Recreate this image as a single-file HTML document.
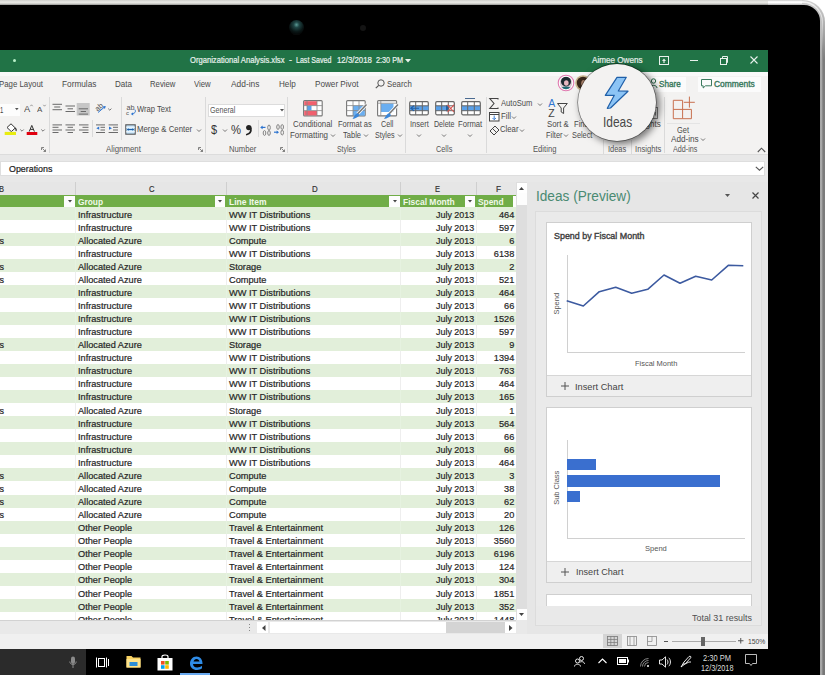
<!DOCTYPE html>
<html><head><meta charset="utf-8"><style>
html,body{margin:0;padding:0;width:825px;height:675px;overflow:hidden;background:#fff;}
body{position:relative;font-family:"Liberation Sans",sans-serif;}
.b{position:absolute;}
.s{position:absolute;overflow:visible;}
.t{position:absolute;white-space:nowrap;line-height:1;transform-origin:0 50%;}
.k{-webkit-text-stroke:0.2px currentColor;}
.k1{-webkit-text-stroke:0.1px currentColor;}
.k4{-webkit-text-stroke:0.4px currentColor;}
</style></head><body>
<div class="b" style="left:0px;top:0px;width:825px;height:675px;background:#fff;"></div>
<div class="b" style="left:-40px;top:0px;width:865px;height:700px;background:linear-gradient(180deg,#d0d0d0 0px,#b0b0b0 25px,#7c7c7c 60px,#777 100%);border-top-right-radius:22px;"></div>
<div class="b" style="left:-40px;top:1px;width:863px;height:700px;background:linear-gradient(180deg,#f4f4f4 0px,#e0e0e0 18px,#8c8c8c 50px,#888 100%);border-top-right-radius:21px;"></div>
<div class="b" style="left:-40px;top:2.5px;width:862px;height:700px;background:linear-gradient(180deg,#c8c8c8 0px,#bdbdbd 25px,#a8a8a8 60px,#a6a6a6 100%);border-top-right-radius:19px;"></div>
<div class="b" style="left:0px;top:0px;width:770px;height:5px;background:linear-gradient(180deg,#cfcfcb 0%,#ecece8 45%,#c8c8c4 80%,#8a8a8a 100%);"></div>
<div class="b" style="left:768px;top:0px;width:34px;height:5px;background:linear-gradient(180deg,#c8c8c8 0%,#f6f6f6 30%,#ffffff 55%,#b0b0b0 100%);"></div>
<div class="b" style="left:-40px;top:5px;width:860px;height:700px;background:#000;border-top-right-radius:16px;"></div>
<div class="b" style="left:288.5px;top:20px;width:15px;height:15px;border-radius:50%;background:radial-gradient(circle at 50% 32%,#5a9a95 0%,#1f4444 22%,#0a1616 55%,#050808 75%,#2a2a2a 92%,#111 100%);"></div>
<div class="b" style="left:360px;top:24.5px;width:6px;height:6px;border-radius:50%;background:#141414;"></div>
<div class="b" style="left:0px;top:50px;width:768px;height:22px;background:#217346;"></div>
<div class="t k" style="left:190.10px;top:57.00px;font-size:8.2px;color:#e8f1ec;transform:scaleX(0.9308);">Organizational Analysis.xlsx</div>
<div class="t k" style="left:289.00px;top:57.00px;font-size:8.2px;color:#e8f1ec;transform:scaleX(1.0985);">-</div>
<div class="t k" style="left:295.50px;top:57.00px;font-size:8.2px;color:#e8f1ec;transform:scaleX(0.8628);">Last Saved</div>
<div class="t k" style="left:336.60px;top:57.00px;font-size:8.2px;color:#e8f1ec;transform:scaleX(0.9594);">12/3/2018</div>
<div class="t k" style="left:375.90px;top:57.00px;font-size:8.2px;color:#e8f1ec;transform:scaleX(0.8874);">2:30 PM</div>
<svg class="s" style="left:405px;top:59px;" width="6" height="4" viewBox="0 0 6 4"><path d="M0 0L6 0L3 3.5Z" fill="#e8f1ec"/></svg>
<div class="t k" style="left:592.00px;top:57.00px;font-size:8.2px;color:#e8f1ec;transform:scaleX(0.9913);">Aimee Owens</div>
<svg class="s" style="left:659px;top:56px;" width="10" height="9" viewBox="0 0 10 9"><rect x="0.5" y="0.5" width="9" height="8" fill="none" stroke="#e8f1ec" stroke-width="1"/><path d="M5 2.5L7 5H3Z M4.4 4.5h1.2v2.5h-1.2z" fill="#e8f1ec"/></svg>
<div class="b" style="left:690px;top:60px;width:8px;height:1px;background:#e8f1ec;"></div>
<svg class="s" style="left:720px;top:56px;" width="8" height="9" viewBox="0 0 8 9"><rect x="0.5" y="2.5" width="6" height="6" fill="none" stroke="#e8f1ec"/><path d="M2.5 2.5V0.5H7.5V6.5H6.5" fill="none" stroke="#e8f1ec"/></svg>
<svg class="s" style="left:750px;top:56px;" width="8" height="8" viewBox="0 0 8 8"><path d="M0.5 0.5L7.5 7.5M7.5 0.5L0.5 7.5" stroke="#e8f1ec" stroke-width="1.1"/></svg>
<div class="b" style="left:0px;top:72px;width:768px;height:23px;background:#f3f2f1;"></div>
<div class="b" style="left:0px;top:72px;width:768px;height:4px;background:#f9f9f9;"></div>
<div class="t" style="left:-1.00px;top:80.00px;font-size:8.8px;color:#4a4a4a;transform:scaleX(0.8903);">Page Layout</div>
<div class="t" style="left:62.30px;top:80.00px;font-size:8.8px;color:#4a4a4a;transform:scaleX(0.9380);">Formulas</div>
<div class="t" style="left:114.50px;top:80.00px;font-size:8.8px;color:#4a4a4a;transform:scaleX(0.9145);">Data</div>
<div class="t" style="left:149.60px;top:80.00px;font-size:8.8px;color:#4a4a4a;transform:scaleX(0.8803);">Review</div>
<div class="t" style="left:194.20px;top:80.00px;font-size:8.8px;color:#4a4a4a;transform:scaleX(0.8829);">View</div>
<div class="t" style="left:231.30px;top:80.00px;font-size:8.8px;color:#4a4a4a;transform:scaleX(0.9518);">Add-ins</div>
<div class="t" style="left:278.70px;top:80.00px;font-size:8.8px;color:#4a4a4a;transform:scaleX(0.9227);">Help</div>
<div class="t" style="left:314.60px;top:80.00px;font-size:8.8px;color:#4a4a4a;transform:scaleX(0.9264);">Power Pivot</div>
<div class="t" style="left:387.40px;top:80.00px;font-size:8.8px;color:#4a4a4a;transform:scaleX(0.8894);">Search</div>
<svg class="s" style="left:375px;top:79px;" width="10" height="10" viewBox="0 0 10 10"><circle cx="6" cy="4" r="3.2" fill="none" stroke="#555" stroke-width="1"/><path d="M3.7 6.3L0.8 9.2" stroke="#555" stroke-width="1.2"/></svg>
<div class="b" style="left:651px;top:76.5px;width:35px;height:15px;background:#fbfbfb;"></div>
<div class="b" style="left:697.5px;top:76.5px;width:63px;height:15px;background:#fbfbfb;"></div>
<div class="t k4" style="left:659.00px;top:80.00px;font-size:8.8px;color:#3b7a5e;transform:scaleX(0.9240);">Share</div>
<div class="t k4" style="left:714.00px;top:80.00px;font-size:8.8px;color:#3b7a5e;transform:scaleX(0.9590);">Comments</div>
<svg class="s" style="left:649px;top:78px;" width="9" height="11" viewBox="0 0 9 11"><circle cx="4.5" cy="3" r="2.2" fill="none" stroke="#2b6e4c" stroke-width="1"/><path d="M1 10C1 6.5 8 6.5 8 10" fill="none" stroke="#2b6e4c" stroke-width="1"/></svg>
<svg class="s" style="left:701px;top:78.5px;" width="11.5" height="10" viewBox="0 0 11.5 10"><path d="M0.5 0.5H10.5V6.8H4.5L2.2 9V6.8H0.5Z" fill="none" stroke="#3b7a5e" stroke-width="1"/></svg>
<svg class="s" style="left:557px;top:74px;" width="18" height="18" viewBox="0 0 18 18"><defs><clipPath id="av1"><circle cx="9" cy="9" r="6.2"/></clipPath></defs><circle cx="9" cy="9" r="7.8" fill="#fff" stroke="#e07ab0" stroke-width="1.1"/><g clip-path="url(#av1)"><rect x="0" y="0" width="18" height="18" fill="#d9c8d0"/><circle cx="9" cy="7.5" r="5" fill="#1c2a30"/><ellipse cx="9.3" cy="9" rx="2.3" ry="2.8" fill="#e8b8c0"/><ellipse cx="9" cy="17" rx="6.5" ry="4.5" fill="#1e6a74"/></g></svg>
<svg class="s" style="left:574px;top:74px;" width="18" height="18" viewBox="0 0 18 18"><circle cx="9" cy="9" r="7.8" fill="#c8b48e"/><circle cx="9" cy="9" r="6.2" fill="#3a281c"/><ellipse cx="10" cy="9.5" rx="2.8" ry="3.4" fill="#b08870"/></svg>
<div class="b" style="left:12.5px;top:58.5px;width:3px;height:3px;background:#b8f0c8;border-radius:50%;"></div>
<div class="b" style="left:0px;top:95px;width:768px;height:59px;background:#f3f2f1;"></div>
<div class="b" style="left:0px;top:154px;width:768px;height:1px;background:#dcdcdc;"></div>
<div class="b" style="left:49px;top:97px;width:1px;height:56px;background:#dadada;"></div>
<div class="b" style="left:121px;top:97px;width:1px;height:43px;background:#dadada;"></div>
<div class="b" style="left:92px;top:120px;width:1px;height:17px;background:#dadada;"></div>
<div class="b" style="left:205px;top:97px;width:1px;height:56px;background:#dadada;"></div>
<div class="b" style="left:258px;top:120px;width:1px;height:17px;background:#dadada;"></div>
<div class="b" style="left:287px;top:97px;width:1px;height:56px;background:#dadada;"></div>
<div class="b" style="left:405px;top:97px;width:1px;height:56px;background:#dadada;"></div>
<div class="b" style="left:486px;top:97px;width:1px;height:56px;background:#dadada;"></div>
<div class="b" style="left:603px;top:140px;width:1px;height:14px;background:#dadada;"></div>
<div class="b" style="left:631px;top:140px;width:1px;height:14px;background:#dadada;"></div>
<div class="b" style="left:664px;top:97px;width:1px;height:56px;background:#dadada;"></div>
<div class="b" style="left:0px;top:103.9px;width:20px;height:12.1px;background:#fdfdfd;"></div>
<div class="t" style="left:-0.50px;top:106.00px;font-size:8.5px;color:#444;transform:scaleX(0.6980);">1</div>
<svg class="s" style="left:14.8px;top:108.2px;" width="4" height="3" viewBox="0 0 4 3"><path d="M0 0H3.6L1.8 2.3Z" fill="#555"/></svg>
<div class="t" style="left:24.00px;top:105.00px;font-size:9px;color:#4a4a4a;transform:scaleX(1.0328);">A</div>
<div class="t" style="left:37.00px;top:106.00px;font-size:7.8px;color:#4a4a4a;transform:scaleX(1.0187);">A</div>
<svg class="s" style="left:30px;top:104px;" width="3" height="3" viewBox="0 0 3 3"><path d="M0.3 2.2L1.5 0.8L2.7 2.2" fill="none" stroke="#777" stroke-width=".7"/></svg>
<svg class="s" style="left:43px;top:104px;" width="3" height="3" viewBox="0 0 3 3"><path d="M0.3 0.8L1.5 2.2L2.7 0.8" fill="none" stroke="#777" stroke-width=".7"/></svg>
<svg class="s" style="left:4px;top:122px;" width="14" height="14" viewBox="0 0 14 14"><path d="M3 5.5L7 1.8L11.3 6L7.3 9.6Z" fill="#fff" stroke="#333" stroke-width="1"/><path d="M11.3 6C12.2 7 12.4 8.2 12 9" fill="none" stroke="#333" stroke-width="1.3"/><rect x="0.7" y="9.9" width="11.3" height="3.1" fill="#e8ec10"/></svg>
<svg class="s" style="left:20px;top:129px;" width="4" height="3" viewBox="0 0 4 3"><path d="M0.3 0.5L2 2.2L3.7 0.5" fill="none" stroke="#555" stroke-width=".8"/></svg>
<svg class="s" style="left:26px;top:122px;" width="12" height="14" viewBox="0 0 12 14"><path d="M3.2 9.6L5.8 3.4L8.4 9.6M4.2 7.4H7.4" fill="none" stroke="#333" stroke-width="1"/><rect x="0.7" y="10" width="10.6" height="3" fill="#e00010"/></svg>
<svg class="s" style="left:41px;top:129px;" width="4" height="3" viewBox="0 0 4 3"><path d="M0.3 0.5L2 2.2L3.7 0.5" fill="none" stroke="#555" stroke-width=".8"/></svg>
<svg class="s" style="left:0;top:0" width="825" height="200" viewBox="0 0 825 200"><rect x="52.50" y="103.80" width="9.50" height="1.0" fill="#6a6a6a"/><rect x="54.20" y="106.50" width="6.10" height="1.0" fill="#6a6a6a"/><rect x="52.50" y="109.20" width="9.50" height="1.0" fill="#6a6a6a"/><rect x="65.50" y="105.50" width="9.50" height="1.0" fill="#6a6a6a"/><rect x="67.50" y="108.30" width="5.50" height="1.0" fill="#6a6a6a"/><rect x="65.50" y="111.00" width="9.50" height="1.0" fill="#6a6a6a"/><rect x="76.7" y="103" width="13" height="12.5" fill="#c6c6c6"/><rect x="78.70" y="108.30" width="9.30" height="1.0" fill="#6a6a6a"/><rect x="80.70" y="111.00" width="5.30" height="1.0" fill="#6a6a6a"/><rect x="78.70" y="113.60" width="9.30" height="1.0" fill="#6a6a6a"/><rect x="52.50" y="124.40" width="9.50" height="1.0" fill="#6a6a6a"/><rect x="65.50" y="124.40" width="9.50" height="1.0" fill="#6a6a6a"/><rect x="79.00" y="124.40" width="9.50" height="1.0" fill="#6a6a6a"/><rect x="52.50" y="126.80" width="6.00" height="1.0" fill="#6a6a6a"/><rect x="67.50" y="126.80" width="5.50" height="1.0" fill="#6a6a6a"/><rect x="82.50" y="126.80" width="6.00" height="1.0" fill="#6a6a6a"/><rect x="52.50" y="129.50" width="9.50" height="1.0" fill="#6a6a6a"/><rect x="65.50" y="129.50" width="9.50" height="1.0" fill="#6a6a6a"/><rect x="79.00" y="129.50" width="9.50" height="1.0" fill="#6a6a6a"/><rect x="52.50" y="132.00" width="6.00" height="1.0" fill="#6a6a6a"/><rect x="67.50" y="132.00" width="5.50" height="1.0" fill="#6a6a6a"/><rect x="82.50" y="132.00" width="6.00" height="1.0" fill="#6a6a6a"/><rect x="96.00" y="124.40" width="9.00" height="1.0" fill="#6a6a6a"/><rect x="100.50" y="126.80" width="4.50" height="1.0" fill="#6a6a6a"/><rect x="100.50" y="129.50" width="4.50" height="1.0" fill="#6a6a6a"/><rect x="96.00" y="132.00" width="9.00" height="1.0" fill="#6a6a6a"/><path d="M96.3 128.2L99.2 126.6V129.8Z" fill="#2e75d0"/><rect x="108.60" y="124.40" width="9.40" height="1.0" fill="#6a6a6a"/><rect x="113.00" y="126.80" width="5.00" height="1.0" fill="#6a6a6a"/><rect x="113.00" y="129.50" width="5.00" height="1.0" fill="#6a6a6a"/><rect x="108.60" y="132.00" width="9.40" height="1.0" fill="#6a6a6a"/><path d="M112 128.2L109 126.6V129.8Z" fill="#2e75d0"/><text x="95" y="110" font-size="7.5" font-family="Liberation Sans" fill="#555" transform="rotate(-40 98.5 107.5)">ab</text><path d="M98 112.5L104.8 106.8" stroke="#2e75d0" stroke-width="1"/><path d="M105.8 106L102.6 106.6L104.9 109Z" fill="#2e75d0"/><path d="M108.2 108.6L109.8 110.2L111.4 108.6" fill="none" stroke="#555" stroke-width=".8"/></svg>
<svg class="s" style="left:125px;top:102px;" width="12" height="14" viewBox="0 0 12 14"><text x="1.5" y="7.8" font-size="7.2" font-family="Liberation Sans" fill="#555">ab</text><text x="1" y="13" font-size="6" font-family="Liberation Sans" fill="#555">c</text><path d="M9.8 7.5C11 9 10.5 11.2 7.5 11.8" fill="none" stroke="#2e75d0" stroke-width="1"/><path d="M5.8 11.9L8.2 10.3V13.5Z" fill="#2e75d0"/></svg>
<div class="t" style="left:136.80px;top:105.00px;font-size:8.8px;color:#4a4a4a;transform:scaleX(0.8653);">Wrap Text</div>
<svg class="s" style="left:124.5px;top:123.5px;" width="11" height="11" viewBox="0 0 11 11"><rect x="0.8" y="0.8" width="9.4" height="9.4" fill="#bfe0f8" stroke="#555" stroke-width="1.1"/><path d="M1 3.2H10M1 7.8H10" stroke="#fff" stroke-width=".9"/><path d="M2.3 5.5H8.7" stroke="#1f5fa8" stroke-width="1"/><path d="M2 5.5L3.8 4.2V6.8Z M9 5.5L7.2 4.2V6.8Z" fill="#1f5fa8"/></svg>
<div class="t" style="left:136.80px;top:125.00px;font-size:8.8px;color:#4a4a4a;transform:scaleX(0.8886);">Merge &amp; Center</div>
<svg class="s" style="left:196.5px;top:128.5px;" width="4" height="3" viewBox="0 0 4 3"><path d="M0 0.5L2 2.5L4 0.5" fill="none" stroke="#555" stroke-width=".8"/></svg>
<div class="t" style="left:105.60px;top:145.00px;font-size:8.8px;color:#555;transform:scaleX(0.8918);">Alignment</div>
<svg class="s" style="left:40.5px;top:147px;" width="5" height="5" viewBox="0 0 5 5"><path d="M0.5 0.5H3M0.5 0.5V3M1.5 1.5L4.5 4.5M4.5 2.5V4.5H2.5" fill="none" stroke="#666" stroke-width=".8"/></svg>
<svg class="s" style="left:198px;top:147px;" width="5" height="5" viewBox="0 0 5 5"><path d="M0.5 0.5H3M0.5 0.5V3M1.5 1.5L4.5 4.5M4.5 2.5V4.5H2.5" fill="none" stroke="#666" stroke-width=".8"/></svg>
<div class="b" style="left:208px;top:103.5px;width:76.5px;height:13px;background:#fff;border:1px solid #dcdcdc;box-sizing:border-box;"></div>
<div class="t" style="left:210.00px;top:106.00px;font-size:8.8px;color:#555;transform:scaleX(0.8113);">General</div>
<svg class="s" style="left:279.5px;top:109px;" width="4" height="3" viewBox="0 0 4 3"><path d="M0 0H4L2 2.5Z" fill="#555"/></svg>
<div class="t" style="left:210.50px;top:123.00px;font-size:13px;color:#333;transform:scaleX(0.8437);">$</div>
<svg class="s" style="left:222.5px;top:129px;" width="4" height="3" viewBox="0 0 4 3"><path d="M0 0.5L2 2.5L4 0.5" fill="none" stroke="#555" stroke-width=".8"/></svg>
<div class="t" style="left:230.50px;top:123.00px;font-size:13px;color:#333;transform:scaleX(0.8651);">%</div>
<svg class="s" style="left:245px;top:124px;" width="8" height="11" viewBox="0 0 8 11"><circle cx="3.8" cy="3.6" r="2.7" fill="#222"/><path d="M5.8 4.5C6.3 7.5 4.5 9.8 1.8 10.5" fill="none" stroke="#222" stroke-width="1.8" stroke-linecap="round"/></svg>
<svg class="s" style="left:259px;top:123px;" width="13" height="13" viewBox="0 0 13 13"><path d="M6.5 4.4H2.2" stroke="#2e75d0" stroke-width="1.2"/><path d="M1.2 4.4L3.6 2.6V6.2Z" fill="#2e75d0"/><ellipse cx="10" cy="4.6" rx="1.3" ry="2.6" fill="none" stroke="#777" stroke-width=".9"/><ellipse cx="5.5" cy="10" rx="1.3" ry="2.4" fill="none" stroke="#777" stroke-width=".9"/><ellipse cx="10" cy="10" rx="1.3" ry="2.4" fill="none" stroke="#777" stroke-width=".9"/></svg>
<svg class="s" style="left:273px;top:123px;" width="12" height="13" viewBox="0 0 12 13"><ellipse cx="5" cy="4" rx="1.3" ry="2.4" fill="none" stroke="#777" stroke-width=".9"/><ellipse cx="9.2" cy="4" rx="1.3" ry="2.4" fill="none" stroke="#777" stroke-width=".9"/><path d="M1 9.2H5" stroke="#2e75d0" stroke-width="1.2"/><path d="M6 9.2L3.6 7.4V11Z" fill="#2e75d0"/><ellipse cx="9.2" cy="9.6" rx="1.3" ry="2.4" fill="none" stroke="#777" stroke-width=".9"/></svg>
<div class="t" style="left:228.50px;top:145.00px;font-size:8.8px;color:#555;transform:scaleX(0.8722);">Number</div>
<svg class="s" style="left:280px;top:147px;" width="5" height="5" viewBox="0 0 5 5"><path d="M0.5 0.5H3M0.5 0.5V3M1.5 1.5L4.5 4.5M4.5 2.5V4.5H2.5" fill="none" stroke="#666" stroke-width=".8"/></svg>
<svg class="s" style="left:303px;top:99.5px;" width="20" height="17" viewBox="0 0 20 17"><rect x="0.6" y="0.6" width="18.6" height="15.3" rx="1" fill="#fff" stroke="#777" stroke-width="1.1"/><rect x="1.2" y="1.2" width="12.8" height="4.3" fill="#f0606e"/><rect x="4" y="5.8" width="4.5" height="4.6" fill="#5aa0e8"/><rect x="1.2" y="10.8" width="12.8" height="4.6" fill="#f0606e"/><path d="M4 0.6V15.9M14 0.6V15.9M0.6 5.6H19.2M0.6 10.6H19.2" stroke="#888" stroke-width=".8"/></svg>
<svg class="s" style="left:345.5px;top:99.5px;" width="22" height="20" viewBox="0 0 22 20"><rect x="0.6" y="0.6" width="18.6" height="15.3" rx="1" fill="#fff" stroke="#777" stroke-width="1.1"/><rect x="7" y="5.6" width="11.8" height="10" fill="#6aaef0"/><path d="M7 0.6V15.9M13 0.6V15.9M0.6 5.6H19.2M0.6 10.6H19.2" stroke="#888" stroke-width=".8"/><path d="M20.5 4.5L11.5 14" stroke="#fff" stroke-width="3.2"/><path d="M20.5 4.5L11.5 14" stroke="#777" stroke-width="1.6"/><path d="M11.8 13.2C9.5 13.5 8.5 15.5 6.5 19C9.5 18.5 12.5 17 13.5 15Z" fill="#3a86d8"/></svg>
<svg class="s" style="left:377px;top:99.5px;" width="22" height="20" viewBox="0 0 22 20"><rect x="0.6" y="0.6" width="19" height="15.3" rx="1" fill="#fff" stroke="#777" stroke-width="1.1"/><rect x="4" y="3.5" width="12.5" height="8.5" fill="#6aaef0"/><path d="M0.6 3.2H19.6M3.8 0.6V15.9" stroke="#888" stroke-width=".8"/><path d="M21 4.5L12 14" stroke="#fff" stroke-width="3.2"/><path d="M21 4.5L12 14" stroke="#777" stroke-width="1.6"/><path d="M12.3 13.2C10 13.5 9 15.5 7 19C10 18.5 13 17 14 15Z" fill="#3a86d8"/></svg>
<div class="t" style="left:293.00px;top:120.00px;font-size:8.8px;color:#4a4a4a;transform:scaleX(0.8925);">Conditional</div>
<div class="t" style="left:290.00px;top:131.00px;font-size:8.8px;color:#4a4a4a;transform:scaleX(0.9035);">Formatting</div>
<div class="t" style="left:338.00px;top:120.00px;font-size:8.8px;color:#4a4a4a;transform:scaleX(0.8533);">Format as</div>
<div class="t" style="left:343.00px;top:131.00px;font-size:8.8px;color:#4a4a4a;transform:scaleX(0.8556);">Table</div>
<div class="t" style="left:381.00px;top:120.00px;font-size:8.8px;color:#4a4a4a;transform:scaleX(0.8179);">Cell</div>
<div class="t" style="left:374.50px;top:131.00px;font-size:8.8px;color:#4a4a4a;transform:scaleX(0.8137);">Styles</div>
<svg class="s" style="left:331px;top:134px;" width="4" height="3" viewBox="0 0 4 3"><path d="M0 0.5L2 2.5L4 0.5" fill="none" stroke="#555" stroke-width=".8"/></svg>
<svg class="s" style="left:364px;top:134px;" width="4" height="3" viewBox="0 0 4 3"><path d="M0 0.5L2 2.5L4 0.5" fill="none" stroke="#555" stroke-width=".8"/></svg>
<svg class="s" style="left:397.5px;top:134px;" width="4" height="3" viewBox="0 0 4 3"><path d="M0 0.5L2 2.5L4 0.5" fill="none" stroke="#555" stroke-width=".8"/></svg>
<div class="t" style="left:337.00px;top:145.00px;font-size:8.8px;color:#555;transform:scaleX(0.7845);">Styles</div>
<svg class="s" style="left:409.4px;top:100.5px;" width="22" height="16.5" viewBox="0 0 22 16.5"><rect x="0.7" y="0.7" width="18.6" height="13.1" rx="1.2" fill="#fff" stroke="#666" stroke-width="1.2"/><rect x="1" y="4.8" width="18.5" height="4.9" fill="#5aa0e8"/><path d="M6.7 0.7V13.8M13.3 0.7V13.8M0.7 4.8H19.3M0.7 9.7H19.3" stroke="#666" stroke-width="1"/><path d="M10 7.25H2.2M5 4.6L1.8 7.25L5 9.9" fill="none" stroke="#1f5fa8" stroke-width="1.1"/></svg>
<svg class="s" style="left:434.5px;top:100.5px;" width="22" height="16.5" viewBox="0 0 22 16.5"><rect x="0.7" y="0.7" width="18.6" height="13.1" rx="1.2" fill="#fff" stroke="#666" stroke-width="1.2"/><rect x="1" y="4.8" width="12" height="4.9" fill="#5aa0e8"/><path d="M11 3.8L14.5 7.25L11 10.7Z" fill="#1f5fa8"/><path d="M6.7 0.7V13.8M13.3 0.7V13.8M0.7 4.8H19.3M0.7 9.7H19.3" stroke="#666" stroke-width="1"/><path d="M12.5 3.8L19 11M19 3.8L12.5 11" stroke="#d9534f" stroke-width="1.1"/></svg>
<svg class="s" style="left:461px;top:100.5px;" width="22" height="16.5" viewBox="0 0 22 16.5"><rect x="0.7" y="0.7" width="18.6" height="13.1" rx="1.2" fill="#fff" stroke="#666" stroke-width="1.2"/><rect x="1" y="4.8" width="18" height="4.9" fill="#5aa0e8"/><path d="M6.7 0.7V13.8M13.3 0.7V13.8M0.7 4.8H19.3M0.7 9.7H19.3" stroke="#666" stroke-width="1"/></svg>
<div class="b" style="left:465px;top:97.5px;width:10px;height:1.2px;background:#4a6a90;"></div>
<div class="t" style="left:409.70px;top:120.00px;font-size:8.8px;color:#4a4a4a;transform:scaleX(0.8542);">Insert</div>
<div class="t" style="left:434.00px;top:120.00px;font-size:8.8px;color:#4a4a4a;transform:scaleX(0.8059);">Delete</div>
<div class="t" style="left:457.60px;top:120.00px;font-size:8.8px;color:#4a4a4a;transform:scaleX(0.8683);">Format</div>
<svg class="s" style="left:417px;top:133.5px;" width="4" height="3" viewBox="0 0 4 3"><path d="M0 0.5L2 2.5L4 0.5" fill="none" stroke="#555" stroke-width=".8"/></svg>
<svg class="s" style="left:442px;top:133.5px;" width="4" height="3" viewBox="0 0 4 3"><path d="M0 0.5L2 2.5L4 0.5" fill="none" stroke="#555" stroke-width=".8"/></svg>
<svg class="s" style="left:468px;top:133.5px;" width="4" height="3" viewBox="0 0 4 3"><path d="M0 0.5L2 2.5L4 0.5" fill="none" stroke="#555" stroke-width=".8"/></svg>
<div class="t" style="left:436.40px;top:145.00px;font-size:8.8px;color:#555;transform:scaleX(0.8333);">Cells</div>
<svg class="s" style="left:489px;top:97.5px;" width="10" height="11" viewBox="0 0 10 11"><path d="M9 1.5V0.5H0.8L5 5.5L0.8 10.5H9V9.5" fill="none" stroke="#444" stroke-width="1.1"/></svg>
<div class="t" style="left:501.00px;top:99.00px;font-size:8.8px;color:#4a4a4a;transform:scaleX(0.8674);">AutoSum</div>
<svg class="s" style="left:537.5px;top:102.5px;" width="4" height="3" viewBox="0 0 4 3"><path d="M0 0.5L2 2.5L4 0.5" fill="none" stroke="#555" stroke-width=".8"/></svg>
<svg class="s" style="left:489px;top:111.5px;" width="10.5" height="9.5" viewBox="0 0 10.5 9.5"><rect x="0.5" y="0.5" width="9.5" height="8.5" fill="#fff" stroke="#444"/><path d="M0.5 2.5H10" stroke="#444"/><path d="M5.2 3.5V7.5M3.5 6L5.2 7.7L7 6" fill="none" stroke="#2e75d0" stroke-width=".9"/></svg>
<div class="t" style="left:500.50px;top:112.00px;font-size:8.8px;color:#4a4a4a;transform:scaleX(0.8896);">Fill</div>
<svg class="s" style="left:512px;top:115.5px;" width="4" height="3" viewBox="0 0 4 3"><path d="M0 0.5L2 2.5L4 0.5" fill="none" stroke="#555" stroke-width=".8"/></svg>
<svg class="s" style="left:488.5px;top:125px;" width="11" height="10" viewBox="0 0 11 10"><path d="M1 6L6 1L10 5L5 10Z M3.5 3.5L7.5 7.5" fill="none" stroke="#444" stroke-width="1"/></svg>
<div class="t" style="left:500.00px;top:125.00px;font-size:8.8px;color:#4a4a4a;transform:scaleX(0.8797);">Clear</div>
<svg class="s" style="left:520px;top:129px;" width="4" height="3" viewBox="0 0 4 3"><path d="M0 0.5L2 2.5L4 0.5" fill="none" stroke="#555" stroke-width=".8"/></svg>
<svg class="s" style="left:547px;top:96px;" width="22" height="22" viewBox="0 0 22 22"><text x="1.2" y="10.8" font-size="10.5" font-family="Liberation Sans" fill="#2e75d0">A</text><text x="1.2" y="21" font-size="10.5" font-family="Liberation Sans" fill="#444">Z</text><path d="M10.5 7.5H20.3L16.6 12V17.5L14.2 16V12Z" fill="none" stroke="#444" stroke-width="1"/></svg>
<div class="t" style="left:547.00px;top:120.00px;font-size:8.8px;color:#4a4a4a;transform:scaleX(0.8874);">Sort &amp;</div>
<div class="t" style="left:545.50px;top:131.00px;font-size:8.8px;color:#4a4a4a;transform:scaleX(0.8437);">Filter</div>
<svg class="s" style="left:564px;top:134px;" width="4" height="3" viewBox="0 0 4 3"><path d="M0 0.5L2 2.5L4 0.5" fill="none" stroke="#555" stroke-width=".8"/></svg>
<div class="t" style="left:574.00px;top:120.00px;font-size:8.8px;color:#4a4a4a;transform:scaleX(0.8650);">Find &amp;</div>
<div class="t" style="left:571.60px;top:131.00px;font-size:8.8px;color:#4a4a4a;transform:scaleX(0.8341);">Select</div>
<div class="t" style="left:533.00px;top:145.00px;font-size:8.8px;color:#555;transform:scaleX(0.8696);">Editing</div>
<div class="t" style="left:633.00px;top:120.00px;font-size:8.8px;color:#4a4a4a;transform:scaleX(0.9134);">Insights</div>
<div class="t" style="left:607.80px;top:145.00px;font-size:8.8px;color:#555;transform:scaleX(0.8454);">Ideas</div>
<div class="t" style="left:634.60px;top:145.00px;font-size:8.8px;color:#555;transform:scaleX(0.8705);">Insights</div>
<svg class="s" style="left:670px;top:94px;" width="28" height="28" viewBox="0 0 28 28"><path d="M3.3 6.3H12.6V24.7H3.3Z M3.3 15.4H21.4V24.7H12.6 M19.4 2.6V13.6 M13.8 8.3H24.8" fill="none" stroke="#c8704f" stroke-width="1"/></svg>
<div class="b" style="left:667px;top:123px;width:33px;height:1px;background:#e4e4e4;"></div>
<div class="t" style="left:677.00px;top:126.00px;font-size:8.8px;color:#4a4a4a;transform:scaleX(0.8460);">Get</div>
<div class="t" style="left:670.80px;top:135.00px;font-size:8.8px;color:#4a4a4a;transform:scaleX(0.9283);">Add-ins</div>
<svg class="s" style="left:700.5px;top:137.5px;" width="4" height="3" viewBox="0 0 4 3"><path d="M0 0.5L2 2.5L4 0.5" fill="none" stroke="#555" stroke-width=".8"/></svg>
<div class="t" style="left:673.00px;top:145.00px;font-size:8.8px;color:#555;transform:scaleX(0.8144);">Add-ins</div>
<svg class="s" style="left:757px;top:147px;" width="9" height="6" viewBox="0 0 9 6"><path d="M0.8 5L4.5 1.2L8.2 5" fill="none" stroke="#555" stroke-width="1.1"/></svg>
<svg class="s" style="left:648px;top:107px;" width="11" height="12" viewBox="0 0 11 12"><rect x="0.5" y="0.5" width="9" height="11" fill="none" stroke="#777" stroke-width=".9"/><path d="M2.5 8.5V6M5 8.5V3.5M7.5 8.5V5" stroke="#777" stroke-width=".9"/></svg>
<div class="b" style="left:578px;top:63.5px;width:78px;height:77px;border-radius:50%;background:#f3f2f1;box-shadow:0 0 0 0.7px rgba(0,0,0,0.45), 3px 2.5px 7px 1px rgba(0,0,0,0.5);"></div>
<svg class="s" style="left:600px;top:70px;" width="32" height="42" viewBox="0 0 32 42"><path d="M17 7.3L26.3 7.3L18.3 21L28 21.2L10.5 38L7.3 38.3L14.3 25.3L5.3 25.3Z" fill="#8cc4f5" stroke="#1f5fa8" stroke-width="1.2" stroke-linejoin="round"/></svg>
<div class="t" style="left:603.00px;top:115.00px;font-size:14.2px;color:#484848;transform:scaleX(0.8406);-webkit-text-stroke:0;">Ideas</div>
<div class="b" style="left:0px;top:155px;width:768px;height:27px;background:#e8e8e8;"></div>
<div class="b" style="left:0px;top:160.5px;width:765px;height:15px;background:#fff;border:1px solid #dedede;box-sizing:border-box;"></div>
<div class="t k" style="left:8.70px;top:165.00px;font-size:9px;color:#222;transform:scaleX(0.9858);">Operations</div>
<svg class="s" style="left:755px;top:166px;" width="9" height="5" viewBox="0 0 9 5"><path d="M0.8 0.8L4.5 4.2L8.2 0.8" fill="none" stroke="#555" stroke-width="1.1"/></svg>
<div class="b" style="left:0px;top:181.6px;width:516px;height:13.4px;background:#e6e6e6;"></div>
<div class="b" style="left:75px;top:182px;width:1px;height:13px;background:#cfcfcf;"></div>
<div class="b" style="left:226px;top:182px;width:1px;height:13px;background:#cfcfcf;"></div>
<div class="b" style="left:400px;top:182px;width:1px;height:13px;background:#cfcfcf;"></div>
<div class="b" style="left:476px;top:182px;width:1px;height:13px;background:#cfcfcf;"></div>
<div class="t k" style="left:-1.00px;top:185.00px;font-size:9px;color:#333;transform:scaleX(0.8329);">B</div>
<div class="t k" style="left:148.80px;top:185.00px;font-size:9px;color:#333;transform:scaleX(0.8462);">C</div>
<div class="t k" style="left:311.60px;top:185.00px;font-size:9px;color:#333;transform:scaleX(0.8770);">D</div>
<div class="t k" style="left:434.50px;top:185.00px;font-size:9px;color:#333;transform:scaleX(0.8329);">E</div>
<div class="t k" style="left:495.50px;top:185.00px;font-size:9px;color:#333;transform:scaleX(0.9095);">F</div>
<div class="b" style="left:0px;top:195px;width:516px;height:12px;background:#70ad47;"></div>
<div class="t" style="left:78.00px;top:197.00px;font-size:9.6px;color:#f2f9ec;font-weight:bold;transform:scaleX(0.8682);">Group</div>
<div class="t" style="left:228.70px;top:197.00px;font-size:9.6px;color:#f2f9ec;font-weight:bold;transform:scaleX(0.8899);">Line Item</div>
<div class="t" style="left:402.90px;top:197.00px;font-size:9.6px;color:#f2f9ec;font-weight:bold;transform:scaleX(0.8829);">Fiscal Month</div>
<div class="t" style="left:477.60px;top:197.00px;font-size:9.6px;color:#f2f9ec;font-weight:bold;transform:scaleX(0.8727);">Spend</div>
<div class="b" style="left:64.3px;top:195.5px;width:10.5px;height:11px;background:#fdfdfd;"></div>
<svg class="s" style="left:67.5px;top:200px;" width="4" height="3" viewBox="0 0 4 3"><path d="M0 0H4L2 2.5Z" fill="#444"/></svg>
<div class="b" style="left:214.8px;top:195.5px;width:10.5px;height:11px;background:#fdfdfd;"></div>
<svg class="s" style="left:218.0px;top:200px;" width="4" height="3" viewBox="0 0 4 3"><path d="M0 0H4L2 2.5Z" fill="#444"/></svg>
<div class="b" style="left:389.3px;top:195.5px;width:10.5px;height:11px;background:#fdfdfd;"></div>
<svg class="s" style="left:392.5px;top:200px;" width="4" height="3" viewBox="0 0 4 3"><path d="M0 0H4L2 2.5Z" fill="#444"/></svg>
<div class="b" style="left:464.8px;top:195.5px;width:10.5px;height:11px;background:#fdfdfd;"></div>
<svg class="s" style="left:468.0px;top:200px;" width="4" height="3" viewBox="0 0 4 3"><path d="M0 0H4L2 2.5Z" fill="#444"/></svg>
<div class="b" style="left:512.9px;top:195.5px;width:3.1px;height:11px;background:#fdfdfd;"></div>
<div class="b" style="left:0;top:207px;width:516px;height:413px;overflow:hidden;background:#fff;">
<div class="b" style="left:75px;top:0;width:1px;height:413px;background:#eeeeee;"></div>
<div class="b" style="left:226px;top:0;width:1px;height:413px;background:#eeeeee;"></div>
<div class="b" style="left:400px;top:0;width:1px;height:413px;background:#eeeeee;"></div>
<div class="b" style="left:476px;top:0;width:1px;height:413px;background:#eeeeee;"></div>
<div class="b" style="left:0;top:0.00px;width:516px;height:13.07px;background:#e2efda;"></div>
<div class="b" style="left:75px;top:0.00px;width:1px;height:13.07px;background:#e6f2e0;"></div>
<div class="b" style="left:226px;top:0.00px;width:1px;height:13.07px;background:#e6f2e0;"></div>
<div class="b" style="left:400px;top:0.00px;width:1px;height:13.07px;background:#e6f2e0;"></div>
<div class="b" style="left:476px;top:0.00px;width:1px;height:13.07px;background:#e6f2e0;"></div>
<div class="b" style="left:0;top:26.14px;width:516px;height:13.07px;background:#e2efda;"></div>
<div class="b" style="left:75px;top:26.14px;width:1px;height:13.07px;background:#e6f2e0;"></div>
<div class="b" style="left:226px;top:26.14px;width:1px;height:13.07px;background:#e6f2e0;"></div>
<div class="b" style="left:400px;top:26.14px;width:1px;height:13.07px;background:#e6f2e0;"></div>
<div class="b" style="left:476px;top:26.14px;width:1px;height:13.07px;background:#e6f2e0;"></div>
<div class="b" style="left:0;top:52.28px;width:516px;height:13.07px;background:#e2efda;"></div>
<div class="b" style="left:75px;top:52.28px;width:1px;height:13.07px;background:#e6f2e0;"></div>
<div class="b" style="left:226px;top:52.28px;width:1px;height:13.07px;background:#e6f2e0;"></div>
<div class="b" style="left:400px;top:52.28px;width:1px;height:13.07px;background:#e6f2e0;"></div>
<div class="b" style="left:476px;top:52.28px;width:1px;height:13.07px;background:#e6f2e0;"></div>
<div class="b" style="left:0;top:78.42px;width:516px;height:13.07px;background:#e2efda;"></div>
<div class="b" style="left:75px;top:78.42px;width:1px;height:13.07px;background:#e6f2e0;"></div>
<div class="b" style="left:226px;top:78.42px;width:1px;height:13.07px;background:#e6f2e0;"></div>
<div class="b" style="left:400px;top:78.42px;width:1px;height:13.07px;background:#e6f2e0;"></div>
<div class="b" style="left:476px;top:78.42px;width:1px;height:13.07px;background:#e6f2e0;"></div>
<div class="b" style="left:0;top:104.56px;width:516px;height:13.07px;background:#e2efda;"></div>
<div class="b" style="left:75px;top:104.56px;width:1px;height:13.07px;background:#e6f2e0;"></div>
<div class="b" style="left:226px;top:104.56px;width:1px;height:13.07px;background:#e6f2e0;"></div>
<div class="b" style="left:400px;top:104.56px;width:1px;height:13.07px;background:#e6f2e0;"></div>
<div class="b" style="left:476px;top:104.56px;width:1px;height:13.07px;background:#e6f2e0;"></div>
<div class="b" style="left:0;top:130.70px;width:516px;height:13.07px;background:#e2efda;"></div>
<div class="b" style="left:75px;top:130.70px;width:1px;height:13.07px;background:#e6f2e0;"></div>
<div class="b" style="left:226px;top:130.70px;width:1px;height:13.07px;background:#e6f2e0;"></div>
<div class="b" style="left:400px;top:130.70px;width:1px;height:13.07px;background:#e6f2e0;"></div>
<div class="b" style="left:476px;top:130.70px;width:1px;height:13.07px;background:#e6f2e0;"></div>
<div class="b" style="left:0;top:156.84px;width:516px;height:13.07px;background:#e2efda;"></div>
<div class="b" style="left:75px;top:156.84px;width:1px;height:13.07px;background:#e6f2e0;"></div>
<div class="b" style="left:226px;top:156.84px;width:1px;height:13.07px;background:#e6f2e0;"></div>
<div class="b" style="left:400px;top:156.84px;width:1px;height:13.07px;background:#e6f2e0;"></div>
<div class="b" style="left:476px;top:156.84px;width:1px;height:13.07px;background:#e6f2e0;"></div>
<div class="b" style="left:0;top:182.98px;width:516px;height:13.07px;background:#e2efda;"></div>
<div class="b" style="left:75px;top:182.98px;width:1px;height:13.07px;background:#e6f2e0;"></div>
<div class="b" style="left:226px;top:182.98px;width:1px;height:13.07px;background:#e6f2e0;"></div>
<div class="b" style="left:400px;top:182.98px;width:1px;height:13.07px;background:#e6f2e0;"></div>
<div class="b" style="left:476px;top:182.98px;width:1px;height:13.07px;background:#e6f2e0;"></div>
<div class="b" style="left:0;top:209.12px;width:516px;height:13.07px;background:#e2efda;"></div>
<div class="b" style="left:75px;top:209.12px;width:1px;height:13.07px;background:#e6f2e0;"></div>
<div class="b" style="left:226px;top:209.12px;width:1px;height:13.07px;background:#e6f2e0;"></div>
<div class="b" style="left:400px;top:209.12px;width:1px;height:13.07px;background:#e6f2e0;"></div>
<div class="b" style="left:476px;top:209.12px;width:1px;height:13.07px;background:#e6f2e0;"></div>
<div class="b" style="left:0;top:235.26px;width:516px;height:13.07px;background:#e2efda;"></div>
<div class="b" style="left:75px;top:235.26px;width:1px;height:13.07px;background:#e6f2e0;"></div>
<div class="b" style="left:226px;top:235.26px;width:1px;height:13.07px;background:#e6f2e0;"></div>
<div class="b" style="left:400px;top:235.26px;width:1px;height:13.07px;background:#e6f2e0;"></div>
<div class="b" style="left:476px;top:235.26px;width:1px;height:13.07px;background:#e6f2e0;"></div>
<div class="b" style="left:0;top:261.40px;width:516px;height:13.07px;background:#e2efda;"></div>
<div class="b" style="left:75px;top:261.40px;width:1px;height:13.07px;background:#e6f2e0;"></div>
<div class="b" style="left:226px;top:261.40px;width:1px;height:13.07px;background:#e6f2e0;"></div>
<div class="b" style="left:400px;top:261.40px;width:1px;height:13.07px;background:#e6f2e0;"></div>
<div class="b" style="left:476px;top:261.40px;width:1px;height:13.07px;background:#e6f2e0;"></div>
<div class="b" style="left:0;top:287.54px;width:516px;height:13.07px;background:#e2efda;"></div>
<div class="b" style="left:75px;top:287.54px;width:1px;height:13.07px;background:#e6f2e0;"></div>
<div class="b" style="left:226px;top:287.54px;width:1px;height:13.07px;background:#e6f2e0;"></div>
<div class="b" style="left:400px;top:287.54px;width:1px;height:13.07px;background:#e6f2e0;"></div>
<div class="b" style="left:476px;top:287.54px;width:1px;height:13.07px;background:#e6f2e0;"></div>
<div class="b" style="left:0;top:313.68px;width:516px;height:13.07px;background:#e2efda;"></div>
<div class="b" style="left:75px;top:313.68px;width:1px;height:13.07px;background:#e6f2e0;"></div>
<div class="b" style="left:226px;top:313.68px;width:1px;height:13.07px;background:#e6f2e0;"></div>
<div class="b" style="left:400px;top:313.68px;width:1px;height:13.07px;background:#e6f2e0;"></div>
<div class="b" style="left:476px;top:313.68px;width:1px;height:13.07px;background:#e6f2e0;"></div>
<div class="b" style="left:0;top:339.82px;width:516px;height:13.07px;background:#e2efda;"></div>
<div class="b" style="left:75px;top:339.82px;width:1px;height:13.07px;background:#e6f2e0;"></div>
<div class="b" style="left:226px;top:339.82px;width:1px;height:13.07px;background:#e6f2e0;"></div>
<div class="b" style="left:400px;top:339.82px;width:1px;height:13.07px;background:#e6f2e0;"></div>
<div class="b" style="left:476px;top:339.82px;width:1px;height:13.07px;background:#e6f2e0;"></div>
<div class="b" style="left:0;top:365.96px;width:516px;height:13.07px;background:#e2efda;"></div>
<div class="b" style="left:75px;top:365.96px;width:1px;height:13.07px;background:#e6f2e0;"></div>
<div class="b" style="left:226px;top:365.96px;width:1px;height:13.07px;background:#e6f2e0;"></div>
<div class="b" style="left:400px;top:365.96px;width:1px;height:13.07px;background:#e6f2e0;"></div>
<div class="b" style="left:476px;top:365.96px;width:1px;height:13.07px;background:#e6f2e0;"></div>
<div class="b" style="left:0;top:392.10px;width:516px;height:13.07px;background:#e2efda;"></div>
<div class="b" style="left:75px;top:392.10px;width:1px;height:13.07px;background:#e6f2e0;"></div>
<div class="b" style="left:226px;top:392.10px;width:1px;height:13.07px;background:#e6f2e0;"></div>
<div class="b" style="left:400px;top:392.10px;width:1px;height:13.07px;background:#e6f2e0;"></div>
<div class="b" style="left:476px;top:392.10px;width:1px;height:13.07px;background:#e6f2e0;"></div>
</div>
<div class="b" style="left:0;top:0;width:516px;height:620px;overflow:hidden;">
<div class="t k" style="left:77.80px;top:211.00px;font-size:9px;color:#262626;transform:scaleX(1.02);">Infrastructure</div>
<div class="t k" style="left:228.50px;top:211.00px;font-size:9px;color:#262626;transform:scaleX(1.025);">WW IT Distributions</div>
<div class="t k" style="left:435.80px;top:211.00px;font-size:9px;color:#262626;transform:scaleX(0.9889);">July 2013</div>
<div class="t k" style="left:498.95px;top:211.00px;font-size:9.2px;color:#262626;transform:scaleX(1.0000);">464</div>
<div class="t k" style="left:77.80px;top:224.00px;font-size:9px;color:#262626;transform:scaleX(1.02);">Infrastructure</div>
<div class="t k" style="left:228.50px;top:224.00px;font-size:9px;color:#262626;transform:scaleX(1.025);">WW IT Distributions</div>
<div class="t k" style="left:435.80px;top:224.00px;font-size:9px;color:#262626;transform:scaleX(0.9889);">July 2013</div>
<div class="t k" style="left:498.95px;top:224.00px;font-size:9.2px;color:#262626;transform:scaleX(1.0000);">597</div>
<div class="t k" style="left:77.80px;top:237.00px;font-size:9px;color:#262626;transform:scaleX(1.02);">Allocated Azure</div>
<div class="t k" style="left:228.50px;top:237.00px;font-size:9px;color:#262626;transform:scaleX(1.025);">Compute</div>
<div class="t k" style="left:435.80px;top:237.00px;font-size:9px;color:#262626;transform:scaleX(0.9889);">July 2013</div>
<div class="t k" style="left:509.18px;top:237.00px;font-size:9.2px;color:#262626;transform:scaleX(1.0000);">6</div>
<div class="t k" style="left:-0.50px;top:237.00px;font-size:9px;color:#262626;transform:scaleX(1.0000);">s</div>
<div class="t k" style="left:77.80px;top:250.00px;font-size:9px;color:#262626;transform:scaleX(1.02);">Infrastructure</div>
<div class="t k" style="left:228.50px;top:250.00px;font-size:9px;color:#262626;transform:scaleX(1.025);">WW IT Distributions</div>
<div class="t k" style="left:435.80px;top:250.00px;font-size:9px;color:#262626;transform:scaleX(0.9889);">July 2013</div>
<div class="t k" style="left:493.83px;top:250.00px;font-size:9.2px;color:#262626;transform:scaleX(1.0000);">6138</div>
<div class="t k" style="left:77.80px;top:263.00px;font-size:9px;color:#262626;transform:scaleX(1.02);">Allocated Azure</div>
<div class="t k" style="left:228.50px;top:263.00px;font-size:9px;color:#262626;transform:scaleX(1.025);">Storage</div>
<div class="t k" style="left:435.80px;top:263.00px;font-size:9px;color:#262626;transform:scaleX(0.9889);">July 2013</div>
<div class="t k" style="left:509.18px;top:263.00px;font-size:9.2px;color:#262626;transform:scaleX(1.0000);">2</div>
<div class="t k" style="left:-0.50px;top:263.00px;font-size:9px;color:#262626;transform:scaleX(1.0000);">s</div>
<div class="t k" style="left:77.80px;top:276.00px;font-size:9px;color:#262626;transform:scaleX(1.02);">Allocated Azure</div>
<div class="t k" style="left:228.50px;top:276.00px;font-size:9px;color:#262626;transform:scaleX(1.025);">Compute</div>
<div class="t k" style="left:435.80px;top:276.00px;font-size:9px;color:#262626;transform:scaleX(0.9889);">July 2013</div>
<div class="t k" style="left:498.95px;top:276.00px;font-size:9.2px;color:#262626;transform:scaleX(1.0000);">521</div>
<div class="t k" style="left:-0.50px;top:276.00px;font-size:9px;color:#262626;transform:scaleX(1.0000);">s</div>
<div class="t k" style="left:77.80px;top:289.00px;font-size:9px;color:#262626;transform:scaleX(1.02);">Infrastructure</div>
<div class="t k" style="left:228.50px;top:289.00px;font-size:9px;color:#262626;transform:scaleX(1.025);">WW IT Distributions</div>
<div class="t k" style="left:435.80px;top:289.00px;font-size:9px;color:#262626;transform:scaleX(0.9889);">July 2013</div>
<div class="t k" style="left:498.95px;top:289.00px;font-size:9.2px;color:#262626;transform:scaleX(1.0000);">464</div>
<div class="t k" style="left:77.80px;top:302.00px;font-size:9px;color:#262626;transform:scaleX(1.02);">Infrastructure</div>
<div class="t k" style="left:228.50px;top:302.00px;font-size:9px;color:#262626;transform:scaleX(1.025);">WW IT Distributions</div>
<div class="t k" style="left:435.80px;top:302.00px;font-size:9px;color:#262626;transform:scaleX(0.9889);">July 2013</div>
<div class="t k" style="left:504.07px;top:302.00px;font-size:9.2px;color:#262626;transform:scaleX(1.0000);">66</div>
<div class="t k" style="left:77.80px;top:315.00px;font-size:9px;color:#262626;transform:scaleX(1.02);">Infrastructure</div>
<div class="t k" style="left:228.50px;top:315.00px;font-size:9px;color:#262626;transform:scaleX(1.025);">WW IT Distributions</div>
<div class="t k" style="left:435.80px;top:315.00px;font-size:9px;color:#262626;transform:scaleX(0.9889);">July 2013</div>
<div class="t k" style="left:493.83px;top:315.00px;font-size:9.2px;color:#262626;transform:scaleX(1.0000);">1526</div>
<div class="t k" style="left:77.80px;top:328.00px;font-size:9px;color:#262626;transform:scaleX(1.02);">Infrastructure</div>
<div class="t k" style="left:228.50px;top:328.00px;font-size:9px;color:#262626;transform:scaleX(1.025);">WW IT Distributions</div>
<div class="t k" style="left:435.80px;top:328.00px;font-size:9px;color:#262626;transform:scaleX(0.9889);">July 2013</div>
<div class="t k" style="left:498.95px;top:328.00px;font-size:9.2px;color:#262626;transform:scaleX(1.0000);">597</div>
<div class="t k" style="left:77.80px;top:341.00px;font-size:9px;color:#262626;transform:scaleX(1.02);">Allocated Azure</div>
<div class="t k" style="left:228.50px;top:341.00px;font-size:9px;color:#262626;transform:scaleX(1.025);">Storage</div>
<div class="t k" style="left:435.80px;top:341.00px;font-size:9px;color:#262626;transform:scaleX(0.9889);">July 2013</div>
<div class="t k" style="left:509.18px;top:341.00px;font-size:9.2px;color:#262626;transform:scaleX(1.0000);">9</div>
<div class="t k" style="left:-0.50px;top:341.00px;font-size:9px;color:#262626;transform:scaleX(1.0000);">s</div>
<div class="t k" style="left:77.80px;top:354.00px;font-size:9px;color:#262626;transform:scaleX(1.02);">Infrastructure</div>
<div class="t k" style="left:228.50px;top:354.00px;font-size:9px;color:#262626;transform:scaleX(1.025);">WW IT Distributions</div>
<div class="t k" style="left:435.80px;top:354.00px;font-size:9px;color:#262626;transform:scaleX(0.9889);">July 2013</div>
<div class="t k" style="left:493.83px;top:354.00px;font-size:9.2px;color:#262626;transform:scaleX(1.0000);">1394</div>
<div class="t k" style="left:77.80px;top:367.00px;font-size:9px;color:#262626;transform:scaleX(1.02);">Infrastructure</div>
<div class="t k" style="left:228.50px;top:367.00px;font-size:9px;color:#262626;transform:scaleX(1.025);">WW IT Distributions</div>
<div class="t k" style="left:435.80px;top:367.00px;font-size:9px;color:#262626;transform:scaleX(0.9889);">July 2013</div>
<div class="t k" style="left:498.95px;top:367.00px;font-size:9.2px;color:#262626;transform:scaleX(1.0000);">763</div>
<div class="t k" style="left:77.80px;top:380.00px;font-size:9px;color:#262626;transform:scaleX(1.02);">Infrastructure</div>
<div class="t k" style="left:228.50px;top:380.00px;font-size:9px;color:#262626;transform:scaleX(1.025);">WW IT Distributions</div>
<div class="t k" style="left:435.80px;top:380.00px;font-size:9px;color:#262626;transform:scaleX(0.9889);">July 2013</div>
<div class="t k" style="left:498.95px;top:380.00px;font-size:9.2px;color:#262626;transform:scaleX(1.0000);">464</div>
<div class="t k" style="left:77.80px;top:393.00px;font-size:9px;color:#262626;transform:scaleX(1.02);">Infrastructure</div>
<div class="t k" style="left:228.50px;top:393.00px;font-size:9px;color:#262626;transform:scaleX(1.025);">WW IT Distributions</div>
<div class="t k" style="left:435.80px;top:393.00px;font-size:9px;color:#262626;transform:scaleX(0.9889);">July 2013</div>
<div class="t k" style="left:498.95px;top:393.00px;font-size:9.2px;color:#262626;transform:scaleX(1.0000);">165</div>
<div class="t k" style="left:77.80px;top:407.00px;font-size:9px;color:#262626;transform:scaleX(1.02);">Allocated Azure</div>
<div class="t k" style="left:228.50px;top:407.00px;font-size:9px;color:#262626;transform:scaleX(1.025);">Storage</div>
<div class="t k" style="left:435.80px;top:407.00px;font-size:9px;color:#262626;transform:scaleX(0.9889);">July 2013</div>
<div class="t k" style="left:509.18px;top:407.00px;font-size:9.2px;color:#262626;transform:scaleX(1.0000);">1</div>
<div class="t k" style="left:-0.50px;top:407.00px;font-size:9px;color:#262626;transform:scaleX(1.0000);">s</div>
<div class="t k" style="left:77.80px;top:420.00px;font-size:9px;color:#262626;transform:scaleX(1.02);">Infrastructure</div>
<div class="t k" style="left:228.50px;top:420.00px;font-size:9px;color:#262626;transform:scaleX(1.025);">WW IT Distributions</div>
<div class="t k" style="left:435.80px;top:420.00px;font-size:9px;color:#262626;transform:scaleX(0.9889);">July 2013</div>
<div class="t k" style="left:498.95px;top:420.00px;font-size:9.2px;color:#262626;transform:scaleX(1.0000);">564</div>
<div class="t k" style="left:77.80px;top:433.00px;font-size:9px;color:#262626;transform:scaleX(1.02);">Infrastructure</div>
<div class="t k" style="left:228.50px;top:433.00px;font-size:9px;color:#262626;transform:scaleX(1.025);">WW IT Distributions</div>
<div class="t k" style="left:435.80px;top:433.00px;font-size:9px;color:#262626;transform:scaleX(0.9889);">July 2013</div>
<div class="t k" style="left:504.07px;top:433.00px;font-size:9.2px;color:#262626;transform:scaleX(1.0000);">66</div>
<div class="t k" style="left:77.80px;top:446.00px;font-size:9px;color:#262626;transform:scaleX(1.02);">Infrastructure</div>
<div class="t k" style="left:228.50px;top:446.00px;font-size:9px;color:#262626;transform:scaleX(1.025);">WW IT Distributions</div>
<div class="t k" style="left:435.80px;top:446.00px;font-size:9px;color:#262626;transform:scaleX(0.9889);">July 2013</div>
<div class="t k" style="left:504.07px;top:446.00px;font-size:9.2px;color:#262626;transform:scaleX(1.0000);">66</div>
<div class="t k" style="left:77.80px;top:459.00px;font-size:9px;color:#262626;transform:scaleX(1.02);">Infrastructure</div>
<div class="t k" style="left:228.50px;top:459.00px;font-size:9px;color:#262626;transform:scaleX(1.025);">WW IT Distributions</div>
<div class="t k" style="left:435.80px;top:459.00px;font-size:9px;color:#262626;transform:scaleX(0.9889);">July 2013</div>
<div class="t k" style="left:498.95px;top:459.00px;font-size:9.2px;color:#262626;transform:scaleX(1.0000);">464</div>
<div class="t k" style="left:77.80px;top:472.00px;font-size:9px;color:#262626;transform:scaleX(1.02);">Allocated Azure</div>
<div class="t k" style="left:228.50px;top:472.00px;font-size:9px;color:#262626;transform:scaleX(1.025);">Compute</div>
<div class="t k" style="left:435.80px;top:472.00px;font-size:9px;color:#262626;transform:scaleX(0.9889);">July 2013</div>
<div class="t k" style="left:509.18px;top:472.00px;font-size:9.2px;color:#262626;transform:scaleX(1.0000);">3</div>
<div class="t k" style="left:-0.50px;top:472.00px;font-size:9px;color:#262626;transform:scaleX(1.0000);">s</div>
<div class="t k" style="left:77.80px;top:485.00px;font-size:9px;color:#262626;transform:scaleX(1.02);">Allocated Azure</div>
<div class="t k" style="left:228.50px;top:485.00px;font-size:9px;color:#262626;transform:scaleX(1.025);">Compute</div>
<div class="t k" style="left:435.80px;top:485.00px;font-size:9px;color:#262626;transform:scaleX(0.9889);">July 2013</div>
<div class="t k" style="left:504.07px;top:485.00px;font-size:9.2px;color:#262626;transform:scaleX(1.0000);">38</div>
<div class="t k" style="left:-0.50px;top:485.00px;font-size:9px;color:#262626;transform:scaleX(1.0000);">s</div>
<div class="t k" style="left:77.80px;top:498.00px;font-size:9px;color:#262626;transform:scaleX(1.02);">Allocated Azure</div>
<div class="t k" style="left:228.50px;top:498.00px;font-size:9px;color:#262626;transform:scaleX(1.025);">Compute</div>
<div class="t k" style="left:435.80px;top:498.00px;font-size:9px;color:#262626;transform:scaleX(0.9889);">July 2013</div>
<div class="t k" style="left:504.07px;top:498.00px;font-size:9.2px;color:#262626;transform:scaleX(1.0000);">62</div>
<div class="t k" style="left:-0.50px;top:498.00px;font-size:9px;color:#262626;transform:scaleX(1.0000);">s</div>
<div class="t k" style="left:77.80px;top:511.00px;font-size:9px;color:#262626;transform:scaleX(1.02);">Allocated Azure</div>
<div class="t k" style="left:228.50px;top:511.00px;font-size:9px;color:#262626;transform:scaleX(1.025);">Compute</div>
<div class="t k" style="left:435.80px;top:511.00px;font-size:9px;color:#262626;transform:scaleX(0.9889);">July 2013</div>
<div class="t k" style="left:504.07px;top:511.00px;font-size:9.2px;color:#262626;transform:scaleX(1.0000);">20</div>
<div class="t k" style="left:-0.50px;top:511.00px;font-size:9px;color:#262626;transform:scaleX(1.0000);">s</div>
<div class="t k" style="left:77.80px;top:524.00px;font-size:9px;color:#262626;transform:scaleX(1.02);">Other People</div>
<div class="t k" style="left:228.50px;top:524.00px;font-size:9px;color:#262626;transform:scaleX(1.025);">Travel &amp; Entertainment</div>
<div class="t k" style="left:435.80px;top:524.00px;font-size:9px;color:#262626;transform:scaleX(0.9889);">July 2013</div>
<div class="t k" style="left:498.95px;top:524.00px;font-size:9.2px;color:#262626;transform:scaleX(1.0000);">126</div>
<div class="t k" style="left:77.80px;top:537.00px;font-size:9px;color:#262626;transform:scaleX(1.02);">Other People</div>
<div class="t k" style="left:228.50px;top:537.00px;font-size:9px;color:#262626;transform:scaleX(1.025);">Travel &amp; Entertainment</div>
<div class="t k" style="left:435.80px;top:537.00px;font-size:9px;color:#262626;transform:scaleX(0.9889);">July 2013</div>
<div class="t k" style="left:493.83px;top:537.00px;font-size:9.2px;color:#262626;transform:scaleX(1.0000);">3560</div>
<div class="t k" style="left:77.80px;top:550.00px;font-size:9px;color:#262626;transform:scaleX(1.02);">Other People</div>
<div class="t k" style="left:228.50px;top:550.00px;font-size:9px;color:#262626;transform:scaleX(1.025);">Travel &amp; Entertainment</div>
<div class="t k" style="left:435.80px;top:550.00px;font-size:9px;color:#262626;transform:scaleX(0.9889);">July 2013</div>
<div class="t k" style="left:493.83px;top:550.00px;font-size:9.2px;color:#262626;transform:scaleX(1.0000);">6196</div>
<div class="t k" style="left:77.80px;top:563.00px;font-size:9px;color:#262626;transform:scaleX(1.02);">Other People</div>
<div class="t k" style="left:228.50px;top:563.00px;font-size:9px;color:#262626;transform:scaleX(1.025);">Travel &amp; Entertainment</div>
<div class="t k" style="left:435.80px;top:563.00px;font-size:9px;color:#262626;transform:scaleX(0.9889);">July 2013</div>
<div class="t k" style="left:498.95px;top:563.00px;font-size:9.2px;color:#262626;transform:scaleX(1.0000);">124</div>
<div class="t k" style="left:77.80px;top:576.00px;font-size:9px;color:#262626;transform:scaleX(1.02);">Other People</div>
<div class="t k" style="left:228.50px;top:576.00px;font-size:9px;color:#262626;transform:scaleX(1.025);">Travel &amp; Entertainment</div>
<div class="t k" style="left:435.80px;top:576.00px;font-size:9px;color:#262626;transform:scaleX(0.9889);">July 2013</div>
<div class="t k" style="left:498.95px;top:576.00px;font-size:9.2px;color:#262626;transform:scaleX(1.0000);">304</div>
<div class="t k" style="left:77.80px;top:590.00px;font-size:9px;color:#262626;transform:scaleX(1.02);">Other People</div>
<div class="t k" style="left:228.50px;top:590.00px;font-size:9px;color:#262626;transform:scaleX(1.025);">Travel &amp; Entertainment</div>
<div class="t k" style="left:435.80px;top:590.00px;font-size:9px;color:#262626;transform:scaleX(0.9889);">July 2013</div>
<div class="t k" style="left:493.83px;top:590.00px;font-size:9.2px;color:#262626;transform:scaleX(1.0000);">1851</div>
<div class="t k" style="left:77.80px;top:603.00px;font-size:9px;color:#262626;transform:scaleX(1.02);">Other People</div>
<div class="t k" style="left:228.50px;top:603.00px;font-size:9px;color:#262626;transform:scaleX(1.025);">Travel &amp; Entertainment</div>
<div class="t k" style="left:435.80px;top:603.00px;font-size:9px;color:#262626;transform:scaleX(0.9889);">July 2013</div>
<div class="t k" style="left:498.95px;top:603.00px;font-size:9.2px;color:#262626;transform:scaleX(1.0000);">352</div>
<div class="t k" style="left:77.80px;top:616.00px;font-size:9px;color:#262626;transform:scaleX(1.02);">Other People</div>
<div class="t k" style="left:228.50px;top:616.00px;font-size:9px;color:#262626;transform:scaleX(1.025);">Travel &amp; Entertainment</div>
<div class="t k" style="left:435.80px;top:616.00px;font-size:9px;color:#262626;transform:scaleX(0.9889);">July 2013</div>
<div class="t k" style="left:493.83px;top:616.00px;font-size:9.2px;color:#262626;transform:scaleX(1.0000);">1448</div>
</div>
<div class="b" style="left:516px;top:182px;width:11px;height:438px;background:#dedede;"></div>
<div class="b" style="left:516.5px;top:183px;width:10.5px;height:10px;background:#fff;"></div>
<svg class="s" style="left:519px;top:186.5px;" width="5" height="3" viewBox="0 0 5 3"><path d="M0 3H5L2.5 0Z" fill="#444"/></svg>
<div class="b" style="left:516.5px;top:193px;width:10.5px;height:12px;background:#fdfdfd;"></div>
<div class="b" style="left:516.5px;top:609px;width:10.5px;height:11px;background:#fff;"></div>
<svg class="s" style="left:519px;top:613px;" width="5" height="3" viewBox="0 0 5 3"><path d="M0 0H5L2.5 3Z" fill="#444"/></svg>
<div class="b" style="left:0px;top:620px;width:527px;height:13.5px;background:#e9e9e9;"></div>
<div class="b" style="left:0px;top:620px;width:516px;height:1px;background:#d2d2d2;"></div>
<div class="b" style="left:257px;top:621.8px;width:11px;height:11px;background:#fff;"></div>
<div class="b" style="left:270px;top:621.8px;width:246px;height:11px;background:#fff;"></div>
<div class="b" style="left:446.2px;top:621.8px;width:58.8px;height:11px;background:#d4d4d4;"></div>
<svg class="s" style="left:261.5px;top:624.5px;" width="4" height="6" viewBox="0 0 4 6"><path d="M3.5 0V6L0 3Z" fill="#444"/></svg>
<svg class="s" style="left:508.5px;top:624.5px;" width="4" height="6" viewBox="0 0 4 6"><path d="M0 0V6L3.5 3Z" fill="#444"/></svg>
<div class="b" style="left:248.5px;top:623.5px;width:1px;height:1.2px;background:#888;"></div>
<div class="b" style="left:248.5px;top:626.5px;width:1px;height:1.2px;background:#888;"></div>
<div class="b" style="left:248.5px;top:629.5px;width:1px;height:1.2px;background:#888;"></div>
<div class="b" style="left:527px;top:181.6px;width:241px;height:452px;background:#e6e6e6;"></div>
<div class="t" style="left:536.30px;top:189.00px;font-size:14px;color:#4a8a72;transform:scaleX(0.9737);">Ideas (Preview)</div>
<svg class="s" style="left:725px;top:194px;" width="5" height="3" viewBox="0 0 5 3"><path d="M0 0H5L2.5 3Z" fill="#555"/></svg>
<svg class="s" style="left:751.5px;top:191.5px;" width="7" height="7" viewBox="0 0 7 7"><path d="M0.5 0.5L6.5 6.5M6.5 0.5L0.5 6.5" stroke="#444" stroke-width="1.2"/></svg>
<div class="b" style="left:535.3px;top:211px;width:226.5px;height:414.5px;background:#eaeaea;border:1px solid #dcdcdc;box-sizing:border-box;"></div>
<div class="b" style="left:546.3px;top:222px;width:205.5px;height:175px;background:#fff;border:1px solid #cfcfcf;box-sizing:border-box;"></div>
<div class="b" style="left:547.3px;top:374.5px;width:203.5px;height:21.5px;background:#efefef;border-top:1px solid #d6d6d6;box-sizing:border-box;"></div>
<div class="t k4" style="left:553.50px;top:231.00px;font-size:9.5px;color:#404040;transform:scaleX(0.9365);">Spend by Fiscal Month</div>
<div class="b" style="left:566.5px;top:254.5px;width:1px;height:98px;background:#d0d0d0;"></div>
<div class="b" style="left:566.5px;top:352px;width:178px;height:1px;background:#d0d0d0;"></div>
<svg class="s" style="left:546px;top:222px;" width="205" height="175" viewBox="0 0 205 175"><path d="M20.7 78.7 L37.3 84.0 L53.3 69.7 L69.7 65.3 L85.7 71.3 L101.7 67.3 L118.0 53.0 L134.0 61.3 L149.7 54.3 L165.7 58.0 L182.3 43.3 L197.3 43.7" fill="none" stroke="#3c5aa0" stroke-width="1.6" stroke-linejoin="round"/></svg>
<div class="t" style="left:537px;top:300px;width:40px;text-align:center;font-size:7.5px;color:#555;transform-origin:50% 50%;transform:rotate(-90deg);">Spend</div>
<div class="t" style="left:635.00px;top:360.00px;font-size:8px;color:#555;transform:scaleX(0.9328);">Fiscal Month</div>
<svg class="s" style="left:561px;top:382px;" width="8" height="8" viewBox="0 0 8 8"><path d="M4 0V8M0 4H8" stroke="#555" stroke-width="1"/></svg>
<div class="t" style="left:575.00px;top:383.00px;font-size:9px;color:#444;transform:scaleX(1.0273);">Insert Chart</div>
<div class="b" style="left:546.3px;top:407.4px;width:205.5px;height:175.6px;background:#fff;border:1px solid #cfcfcf;box-sizing:border-box;"></div>
<div class="b" style="left:547.3px;top:560.5px;width:203.5px;height:21.5px;background:#efefef;border-top:1px solid #d6d6d6;box-sizing:border-box;"></div>
<div class="b" style="left:566.5px;top:440px;width:1px;height:98px;background:#d0d0d0;"></div>
<div class="b" style="left:566.5px;top:537.5px;width:178px;height:1px;background:#d0d0d0;"></div>
<div class="b" style="left:567px;top:458.6px;width:29px;height:11.1px;background:#3a6fcf;"></div>
<div class="b" style="left:567px;top:474.9px;width:153px;height:11.8px;background:#3a6fcf;"></div>
<div class="b" style="left:567px;top:490.8px;width:13px;height:11.5px;background:#3a6fcf;"></div>
<div class="t" style="left:527px;top:484.2px;width:60px;text-align:center;font-size:7.5px;color:#555;transform-origin:50% 50%;transform:rotate(-90deg);">Sub Class</div>
<div class="t" style="left:645.30px;top:545.00px;font-size:8px;color:#555;transform:scaleX(0.9423);">Spend</div>
<svg class="s" style="left:561px;top:567.5px;" width="8" height="8" viewBox="0 0 8 8"><path d="M4 0V8M0 4H8" stroke="#555" stroke-width="1"/></svg>
<div class="t" style="left:575.60px;top:568.00px;font-size:9px;color:#444;transform:scaleX(1.0081);">Insert Chart</div>
<div class="b" style="left:546.3px;top:594px;width:205.5px;height:14px;background:#fff;border:1px solid #cfcfcf;border-bottom:none;box-sizing:border-box;"></div>
<div class="b" style="left:536.3px;top:606.3px;width:224.5px;height:18.2px;background:#e9e9e9;"></div>
<div class="t" style="left:692.40px;top:614.00px;font-size:9px;color:#505050;transform:scaleX(0.9912);">Total 31 results</div>
<div class="b" style="left:0px;top:633.5px;width:768px;height:15px;background:#f0f0f0;"></div>
<div class="b" style="left:602.7px;top:633.8px;width:19.1px;height:14.5px;background:#d4d4d4;"></div>
<svg class="s" style="left:607px;top:636px;" width="11" height="10" viewBox="0 0 11 10"><rect x="0.5" y="0.5" width="10" height="9" fill="none" stroke="#777" stroke-width=".8"/><path d="M0.5 3.5H10.5M0.5 6.5H10.5M3.8 0.5V9.5M7.2 0.5V9.5" stroke="#777" stroke-width=".7"/></svg>
<svg class="s" style="left:627px;top:636px;" width="10" height="10" viewBox="0 0 10 10"><rect x="0.5" y="0.5" width="9" height="9" fill="none" stroke="#888" stroke-width=".8"/><path d="M3 0.5V9.5M7 0.5V9.5" stroke="#888" stroke-width=".7"/></svg>
<svg class="s" style="left:646.5px;top:636px;" width="10" height="10" viewBox="0 0 10 10"><rect x="0.5" y="0.5" width="9" height="9" fill="none" stroke="#888" stroke-width=".8"/><path d="M5 0.5V5.5H0.5" stroke="#888" stroke-width=".7" fill="none"/></svg>
<div class="b" style="left:664.3px;top:641px;width:4px;height:1.2px;background:#555;"></div>
<div class="b" style="left:672px;top:641px;width:63.6px;height:1px;background:#aaa;"></div>
<div class="b" style="left:701.2px;top:636.5px;width:3.8px;height:9px;background:#666;"></div>
<svg class="s" style="left:737.6px;top:638px;" width="5.5" height="5.5" viewBox="0 0 5.5 5.5"><path d="M2.75 0V5.5M0 2.75H5.5" stroke="#555" stroke-width="1"/></svg>
<div class="t" style="left:748.30px;top:638.00px;font-size:8px;color:#444;transform:scaleX(0.8455);">150%</div>
<div class="b" style="left:0px;top:648.5px;width:768px;height:27px;background:#000;"></div>
<div class="b" style="left:0px;top:648.5px;width:86px;height:27px;background:#2b2b2b;"></div>
<svg class="s" style="left:68.5px;top:656px;" width="8" height="13" viewBox="0 0 8 13"><rect x="2" y="0.5" width="4" height="7.5" rx="2" fill="#8a8a8a"/><path d="M0.8 5.5C0.8 9.5 7.2 9.5 7.2 5.5M4 9V12" fill="none" stroke="#8a8a8a" stroke-width="1"/></svg>
<svg class="s" style="left:95.5px;top:657px;" width="13" height="11" viewBox="0 0 13 11"><rect x="2.5" y="1.5" width="6" height="8" fill="none" stroke="#fff" stroke-width="1"/><path d="M0.5 0.5V10.5M10.5 0.5V10.5M12.5 2V9" stroke="#fff" stroke-width="1"/></svg>
<svg class="s" style="left:126px;top:654px;" width="15" height="15" viewBox="0 0 15 15"><path d="M0.5 2H5.5L7 3.5H14.5V13.5H0.5Z" fill="#f8d262"/><rect x="0.5" y="5" width="14" height="8.5" fill="#ffe48a"/><rect x="3.5" y="8" width="8" height="4" fill="#2d8fd8"/></svg>
<svg class="s" style="left:156.5px;top:653.5px;" width="16" height="17" viewBox="0 0 16 17"><path d="M5 4V2.5C5 0.5 11 0.5 11 2.5V4" fill="none" stroke="#fff" stroke-width="1.2"/><rect x="0.5" y="4" width="15" height="12.5" fill="#fff"/><rect x="4" y="7" width="3.6" height="3.6" fill="#f25022"/><rect x="8.2" y="7" width="3.6" height="3.6" fill="#7fba00"/><rect x="4" y="11.2" width="3.6" height="3.6" fill="#00a4ef"/><rect x="8.2" y="11.2" width="3.6" height="3.6" fill="#ffb900"/></svg>
<svg class="s" style="left:189px;top:654.5px;" width="15" height="16" viewBox="0 0 15 16"><path d="M2.5 9H13.5C13.8 4.5 11 1.5 7.5 1.5C3.5 1.5 1 5 1 8.5C1 12.5 4 15 8 15C10 15 11.8 14.3 13 13.3V10.8C11.8 11.8 10 12.5 8.2 12.5C5.5 12.5 4 10.8 4 9Z M4.5 6.5C5 5 6 4 7.5 4C9 4 10.3 5 10.5 6.5Z" fill="#2f8ce6" fill-rule="evenodd"/></svg>
<div class="b" style="left:180px;top:672.5px;width:30px;height:2.5px;background:#6aaaf0;"></div>
<svg class="s" style="left:574px;top:656px;" width="11" height="11" viewBox="0 0 11 11"><circle cx="3.5" cy="5" r="2" fill="none" stroke="#fff" stroke-width=".9"/><circle cx="7.5" cy="2.5" r="2" fill="none" stroke="#fff" stroke-width=".9"/><path d="M0.5 10.5C0.5 7.5 6.5 7.5 6.5 10.5M5.5 6.5C7 5 10.5 5.5 10.5 8" fill="none" stroke="#fff" stroke-width=".9"/></svg>
<svg class="s" style="left:598px;top:658px;" width="9" height="6" viewBox="0 0 9 6"><path d="M0.5 5L4.5 1L8.5 5" fill="none" stroke="#fff" stroke-width="1.1"/></svg>
<svg class="s" style="left:617px;top:657px;" width="12" height="8" viewBox="0 0 12 8"><rect x="0.5" y="0.5" width="10" height="7" fill="none" stroke="#fff" stroke-width="1"/><rect x="2" y="2" width="7" height="4" fill="#fff"/><rect x="11" y="2.5" width="1" height="3" fill="#fff"/></svg>
<svg class="s" style="left:640px;top:656px;" width="9" height="11" viewBox="0 0 9 11"><path d="M0.5 10.5A8 8 0 0 1 8.5 2.5M2.5 10.5A6 6 0 0 1 8.5 4.5M4.5 10.5A4 4 0 0 1 8.5 6.5" fill="none" stroke="#aaa" stroke-width=".8"/><circle cx="8" cy="10" r="1" fill="#fff"/></svg>
<svg class="s" style="left:658.5px;top:655.5px;" width="12" height="12" viewBox="0 0 12 12"><path d="M0.5 4H3L6.5 0.8V11.2L3 8H0.5Z" fill="none" stroke="#fff" stroke-width=".9"/><path d="M8 3.5C9.3 5 9.3 7 8 8.5M9.8 1.8C12 4 12 8 9.8 10.2" fill="none" stroke="#fff" stroke-width=".9"/></svg>
<svg class="s" style="left:679.5px;top:655px;" width="12" height="13" viewBox="0 0 12 13"><path d="M1 12L4 7L9 1.5C10.5 0.5 11.5 2 10.5 3L5.5 8.5L1 12Z M3 9C6 10 8 6 11 7" fill="none" stroke="#fff" stroke-width=".9"/></svg>
<div class="t" style="left:702.50px;top:654.00px;font-size:8.5px;color:#dedede;transform:scaleX(0.8845);">2:30 PM</div>
<div class="t" style="left:700.50px;top:664.00px;font-size:8.5px;color:#dedede;transform:scaleX(0.8594);">12/3/2018</div>
<svg class="s" style="left:745px;top:654px;" width="12" height="13" viewBox="0 0 12 13"><path d="M0.5 0.5H11.5V9.5H7.5L6 11.5L4.5 9.5H0.5Z" fill="none" stroke="#d0d0d0" stroke-width="0.9"/></svg>
</body></html>
